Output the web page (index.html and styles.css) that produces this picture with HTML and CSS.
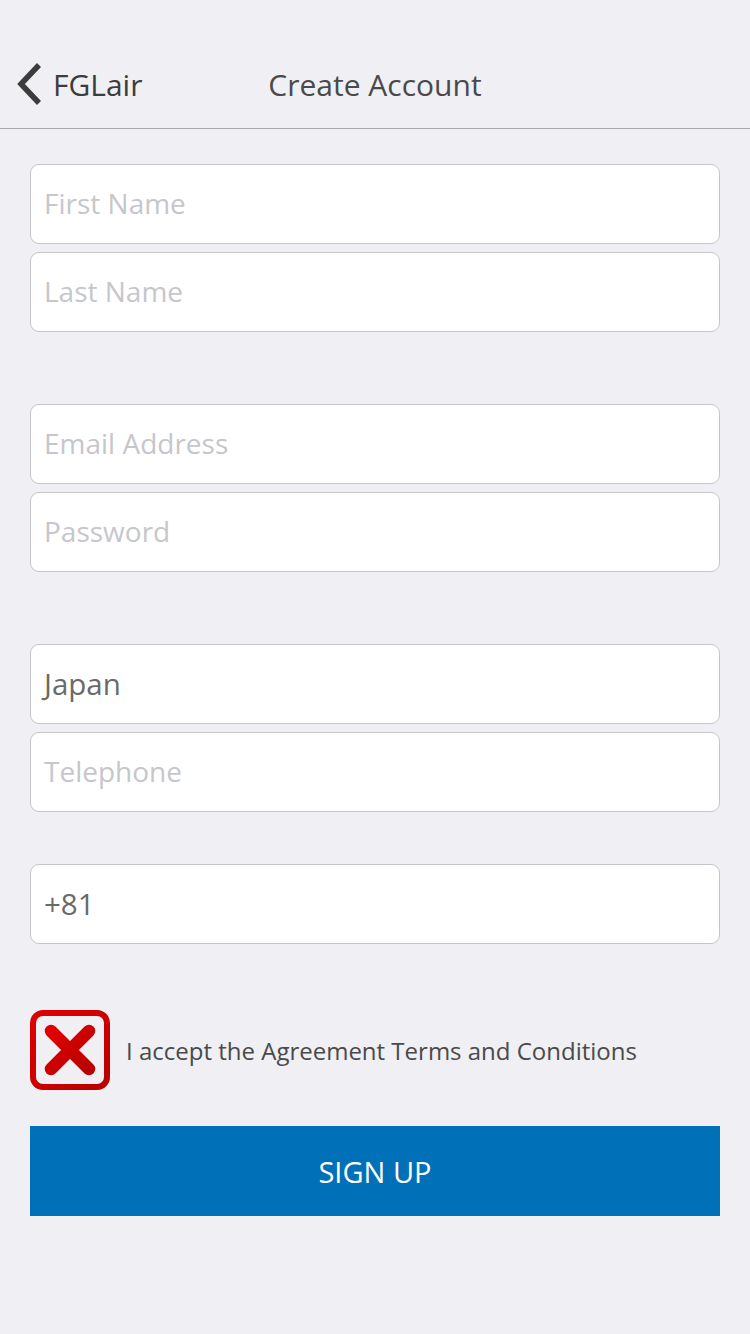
FILE: index.html
```html
<!DOCTYPE html>
<html>
<head>
<meta charset="utf-8">
<link rel="stylesheet" href="styles.css">
</head>
<body>
<div class="page">
  <header class="nav">
    <div class="back">
      <svg class="chev" width="28" height="44" viewBox="0 0 28 44"><path d="M24 3 L6 22 L24 41" fill="none" stroke="#3c3c3c" stroke-width="5.5" stroke-linecap="butt" stroke-linejoin="miter"/></svg>
      <span class="back-label">FGLair</span>
    </div>
    <div class="title">Create Account</div>
  </header>
  <main class="form">
    <div class="group">
      <div class="field placeholder">First Name</div>
      <div class="field placeholder">Last Name</div>
    </div>
    <div class="group">
      <div class="field placeholder">Email Address</div>
      <div class="field placeholder">Password</div>
    </div>
    <div class="group">
      <div class="field value">Japan</div>
      <div class="field placeholder">Telephone</div>
    </div>
    <div class="group g-code">
      <div class="field value">+81</div>
    </div>
    <div class="accept">
      <svg class="xbox" width="80" height="80" viewBox="0 0 80 80">
        <defs>
          <linearGradient id="rg" x1="0" y1="0" x2="1" y2="1">
            <stop offset="0" stop-color="#e00000"/>
            <stop offset="1" stop-color="#b80000"/>
          </linearGradient>
        </defs>
        <rect x="3" y="3" width="74" height="74" rx="10" ry="10" fill="none" stroke="url(#rg)" stroke-width="6"/>
        <path d="M21 21 L59 59 M59 21 L21 59" stroke="url(#rg)" stroke-width="12.5" stroke-linecap="round"/>
      </svg>
      <span class="accept-text">I accept the Agreement Terms and Conditions</span>
    </div>
    <button class="signup">SIGN UP</button>
  </main>
</div>
</body>
</html>
```
FILE: styles.css
```css
* { box-sizing: border-box; }
html, body { margin: 0; padding: 0; }
body {
  background: #efeff4;
  font-family: "Open Sans", "Noto Sans", sans-serif;
  width: 750px;
  height: 1334px;
  overflow: hidden;
}
.page { width: 750px; }
.nav {
  height: 129px;
  border-bottom: 1px solid #a9a9ad;
  display: flex;
  align-items: center;
  position: relative;
  padding-top: 40px;
}
.back {
  display: flex;
  align-items: center;
  padding-left: 15px;
  gap: 10px;
}
.chev { display: block; }
.back-label {
  font-size: 30px;
  color: #3c3c3c;
}
.title {
  position: absolute;
  left: 0;
  right: 0;
  top: 40px;
  bottom: 0;
  display: flex;
  align-items: center;
  justify-content: center;
  font-size: 30px;
  color: #4a4a4a;
  pointer-events: none;
}
.form {
  padding: 35px 30px 0 30px;
  display: flex;
  flex-direction: column;
}
.group {
  display: flex;
  flex-direction: column;
  gap: 8px;
  margin-bottom: 72px;
}
.group:nth-child(3) { margin-bottom: 52px; }
.g-code { margin-bottom: 66px; }
.field {
  height: 80px;
  background: #fff;
  border: 1px solid #c6c6ca;
  border-radius: 9px;
  display: flex;
  align-items: center;
  padding-left: 13px;
  padding-bottom: 2px;
  font-size: 28px;
}
.placeholder { color: #c6c6cb; }
.value { color: #6a6a6a; font-size: 29.5px; padding-top: 0; padding-bottom: 1px; }
.accept {
  display: flex;
  align-items: center;
  gap: 16px;
  height: 80px;
}
.xbox { display: block; flex: none; }
.accept-text {
  font-size: 24px;
  color: #4a4a4a;
}
.signup {
  margin-top: 36px;
  height: 90px;
  width: 690px;
  border: none;
  background: #0070b8;
  color: #fff;
  font-family: "Open Sans", "Noto Sans", sans-serif;
  font-size: 29px;
  padding: 0;
}
```
